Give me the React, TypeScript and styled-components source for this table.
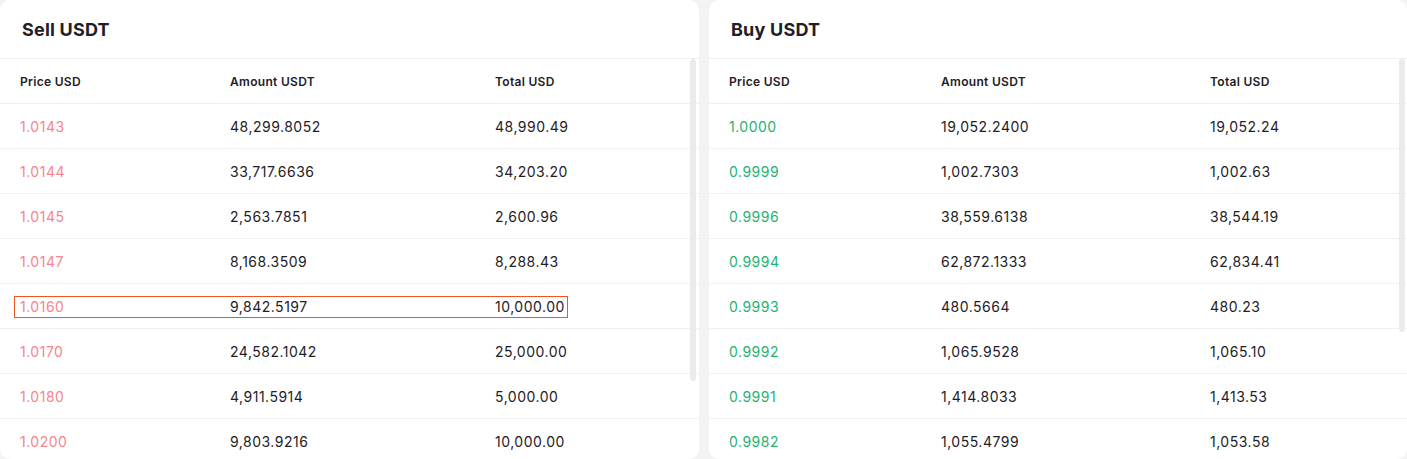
import React from "react";
import styled, { createGlobalStyle } from "styled-components";

const Global = createGlobalStyle`
  html, body { margin: 0; padding: 0; background: #f3f3f3; }
  body { font-family: Inter, "Noto Sans", sans-serif; color: #1e2026; }
  * { box-sizing: border-box; }
`;

const Board = styled.div`
  display: grid;
  grid-template-columns: 699px 698px;
  gap: 10px;
  height: 459px;
`;

const Panel = styled.section`
  position: relative;
  background: #ffffff;
  border-radius: 10px;
  display: flex;
  flex-direction: column;
  overflow: hidden;
  height: 459px;
`;

const PanelHeader = styled.header`
  height: 59px;
  flex: none;
  border-bottom: 1px solid #efefef;
  display: flex;
  align-items: center;
  padding-left: 22px;
`;

const Title = styled.h2`
  margin: 0;
  font-size: 18px;
  font-weight: 700;
  color: #1e2026;
  letter-spacing: 0.2px;
`;

const Scroller = styled.div`
  flex: 1;
  overflow: hidden;
`;

const ScrollThumb = styled.div<{ $left: number; $height: number }>`
  position: absolute;
  top: 59px;
  left: ${(p) => p.$left}px;
  width: 6px;
  height: ${(p) => p.$height}px;
  border-radius: 3px;
  background: #ebebeb;
`;

const Row = styled.div`
  height: 45px;
  border-bottom: 1px solid #f0f0f0;
  display: flex;
  align-items: center;
  padding-left: 14px;
  padding-top: 2px;
`;

const Cells = styled.div<{ $cols: string; $active?: boolean }>`
  display: inline-grid;
  grid-template-columns: ${(p) => p.$cols};
  align-items: center;
  padding: 1px 2px 1px 5px;
  border: 1px solid ${(p) => (p.$active ? "#f0561e" : "transparent")};
  line-height: 18px;
`;

const HeadCell = styled.span`
  font-size: 12px;
  font-weight: 600;
  letter-spacing: 0.3px;
  color: #1e2026;
`;

const Cell = styled.span<{ $tone?: "sell" | "buy" }>`
  font-size: 14px;
  font-weight: 400;
  letter-spacing: 0.5px;
  color: ${(p) => (p.$tone === "sell" ? "#f7848c" : p.$tone === "buy" ? "#1fb272" : "#1e2026")};
`;

type Order = [string, string, string];

const sells: Order[] = [
  ["1.0143", "48,299.8052", "48,990.49"],
  ["1.0144", "33,717.6636", "34,203.20"],
  ["1.0145", "2,563.7851", "2,600.96"],
  ["1.0147", "8,168.3509", "8,288.43"],
  ["1.0160", "9,842.5197", "10,000.00"],
  ["1.0170", "24,582.1042", "25,000.00"],
  ["1.0180", "4,911.5914", "5,000.00"],
  ["1.0200", "9,803.9216", "10,000.00"],
];

const buys: Order[] = [
  ["1.0000", "19,052.2400", "19,052.24"],
  ["0.9999", "1,002.7303", "1,002.63"],
  ["0.9996", "38,559.6138", "38,544.19"],
  ["0.9994", "62,872.1333", "62,834.41"],
  ["0.9993", "480.5664", "480.23"],
  ["0.9992", "1,065.9528", "1,065.10"],
  ["0.9991", "1,414.8033", "1,413.53"],
  ["0.9982", "1,055.4799", "1,053.58"],
];

function Book({
  title,
  orders,
  tone,
  cols,
  thumbLeft,
  thumbHeight,
  activeIndex,
}: {
  title: string;
  orders: Order[];
  tone: "sell" | "buy";
  cols: string;
  thumbLeft: number;
  thumbHeight: number;
  activeIndex?: number;
}) {
  return (
    <Panel>
      <PanelHeader>
        <Title>{title}</Title>
      </PanelHeader>
      <Scroller>
        <Row>
          <Cells $cols={cols}>
            <HeadCell>Price USD</HeadCell>
            <HeadCell>Amount USDT</HeadCell>
            <HeadCell>Total USD</HeadCell>
          </Cells>
        </Row>
        {orders.map((o, i) => (
          <Row key={o[0] + i}>
            <Cells $cols={cols} $active={i === activeIndex}>
              <Cell $tone={tone}>{o[0]}</Cell>
              <Cell>{o[1]}</Cell>
              <Cell>{o[2]}</Cell>
            </Cells>
          </Row>
        ))}
      </Scroller>
      <ScrollThumb $left={thumbLeft} $height={thumbHeight} />
    </Panel>
  );
}

export default function App() {
  return (
    <>
      <Global />
      <Board>
        <Book
          title="Sell USDT"
          orders={sells}
          tone="sell"
          cols="210px 265px auto"
          thumbLeft={690}
          thumbHeight={322}
          activeIndex={4}
        />
        <Book
          title="Buy USDT"
          orders={buys}
          tone="buy"
          cols="212px 269px auto"
          thumbLeft={690}
          thumbHeight={273}
        />
      </Board>
    </>
  );
}
